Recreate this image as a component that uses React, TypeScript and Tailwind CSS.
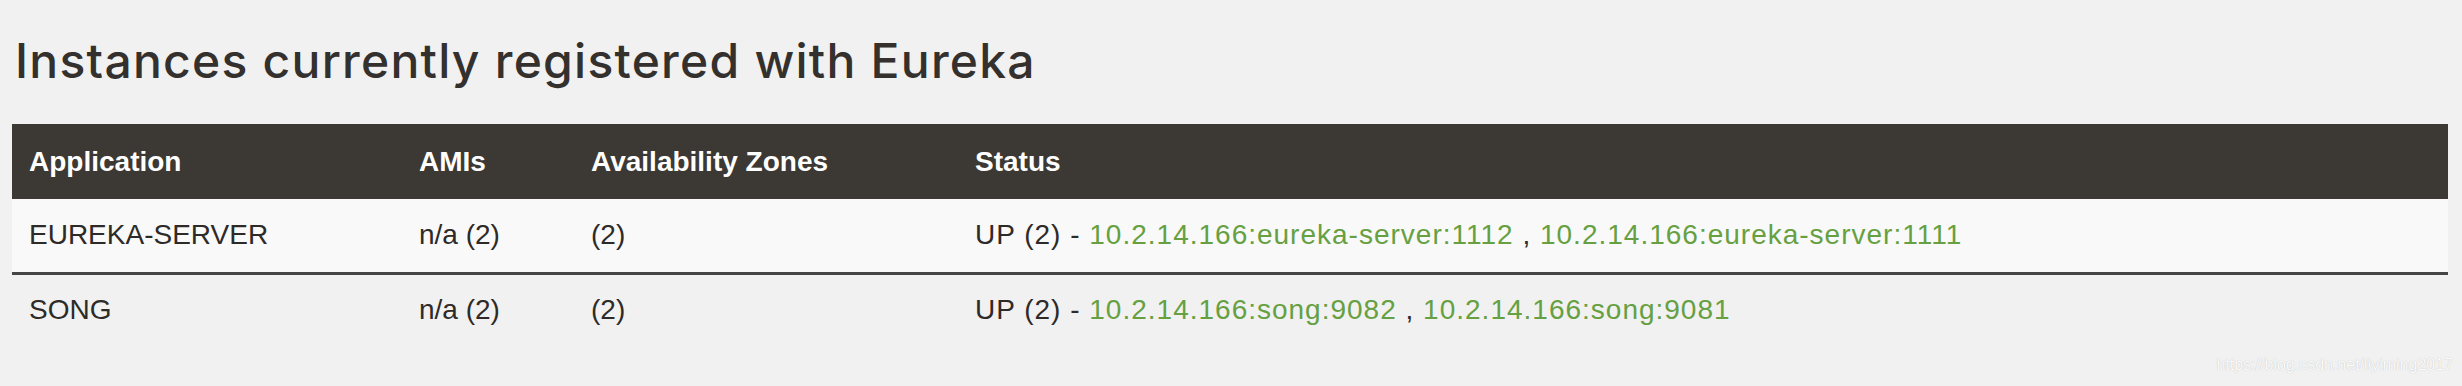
import React from "react";

const rows = [
  {
    app: "EUREKA-SERVER",
    amis: "n/a (2)",
    zones: "(2)",
    links: ["10.2.14.166:eureka-server:1112", "10.2.14.166:eureka-server:1111"],
  },
  {
    app: "SONG",
    amis: "n/a (2)",
    zones: "(2)",
    links: ["10.2.14.166:song:9082", "10.2.14.166:song:9081"],
  },
];

export default function App() {
  return (
    <div className="relative min-h-[386px] w-full bg-[#f1f1f1] px-[12px] pt-[31px] text-[#2e2a27] [font-family:'Liberation_Sans',Arial,sans-serif]">
      <h1 className="pl-[3px] text-[48px] leading-[60px] font-medium tracking-[1.25px] text-[#34302d] [font-family:Inter,'Liberation_Sans',sans-serif]">
        Instances currently registered with Eureka
      </h1>
      <table className="mt-[33px] w-[2436px] table-fixed border-collapse text-left">
        <colgroup>
          <col className="w-[390px]" />
          <col className="w-[172px]" />
          <col className="w-[384px]" />
          <col />
        </colgroup>
        <thead>
          <tr className="h-[75px] bg-[#3c3834] text-white">
            <th className="px-[17px] text-[28px] font-bold">Application</th>
            <th className="px-[17px] text-[28px] font-bold">AMIs</th>
            <th className="px-[17px] text-[28px] font-bold">Availability Zones</th>
            <th className="px-[17px] text-[28px] font-bold">Status</th>
          </tr>
        </thead>
        <tbody className="text-[28px]">
          {rows.map((r, i) => (
            <tr
              key={r.app}
              className={
                i === 0
                  ? "h-[74px] border-b-[3px] border-[#454545] bg-[#f9f9f9]"
                  : "h-[72px]"
              }
            >
              <td className="px-[17px]">{r.app}</td>
              <td className="px-[17px]">{r.amis}</td>
              <td className="px-[17px]">{r.zones}</td>
              <td className="px-[17px] whitespace-nowrap tracking-[1px]">
                UP (2) -{" "}
                <span className="text-[#66a041]">{r.links[0]}</span> ,{" "}
                <span className="text-[#66a041]">{r.links[1]}</span>
              </td>
            </tr>
          ))}
        </tbody>
      </table>
      <div className="absolute right-[9px] top-[355px] text-[16px] leading-[20px] text-[#fafafa] [text-shadow:0_0_1px_#b8b8b8]">
        https://blog.csdn.net/liyiming2017
      </div>
    </div>
  );
}
